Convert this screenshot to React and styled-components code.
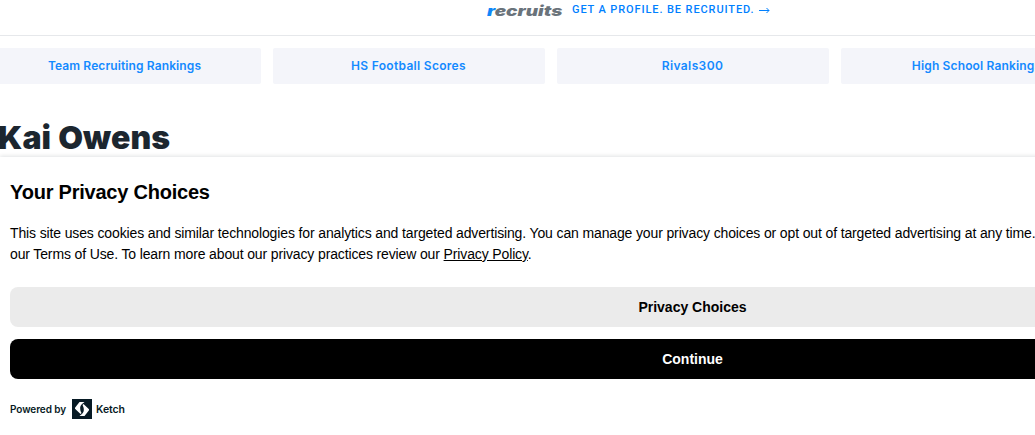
import React from 'react'
import styled, { createGlobalStyle } from 'styled-components'

const GlobalStyle = createGlobalStyle`
  * {
    box-sizing: border-box;
  }
  body {
    margin: 0;
    overflow: hidden;
    background: #fff;
  }
`

const Page = styled.main`
  position: relative;
  height: 435px;
  overflow: hidden;
  font-family: Inter, 'Liberation Sans', sans-serif;
`

const Header = styled.header`
  display: flex;
  align-items: flex-start;
  height: 36px;
  padding-left: 487px;
  border-bottom: 1px solid #e6e8eb;
  white-space: nowrap;
`

const Logo = styled.div`
  width: 85px;
  font-size: 14px;
  font-weight: 900;
  font-style: italic;
  line-height: 21px;
  color: #6a737b;
  transform: scaleX(1.355);
  transform-origin: left;

  & > span {
    color: #0f87f8;
  }
`

const Promo = styled.a`
  display: flex;
  align-items: center;
  gap: 5px;
  height: 19px;
  font-family: Roboto, sans-serif;
  font-size: 11px;
  font-weight: 500;
  letter-spacing: 0.89px;
  color: #0080ff;
`

const Tabs = styled.nav`
  display: flex;
  gap: 12px;
  margin: 12px 0 0 -11px;
`

const Tab = styled.a`
  display: flex;
  flex: 0 0 272px;
  justify-content: center;
  align-items: center;
  height: 36px;
  padding: 0 1px 2px 0;
  border-radius: 2px;
  background: #f4f5fa;
  font-size: 12px;
  font-weight: 600;
  letter-spacing: ${({ $spacing }) => $spacing};
  color: #148aff;
`

const Name = styled.h1`
  margin: 33px 0 0 -2px;
  font-size: 32px;
  font-weight: 900;
  line-height: 42px;
  letter-spacing: 0.1px;
  word-spacing: 0.5px;
  color: #1c262f;
`

const Banner = styled.section`
  position: absolute;
  top: 157px;
  left: 0;
  width: 1385px;
  height: 278px;
  padding: 22px 10px 0;
  background: #fff;
  box-shadow: 0 -1px 4px rgba(7, 26, 36, 0.12);
  font-family: 'Liberation Sans', Arial, sans-serif;
  color: #000;
`

const Title = styled.h2`
  margin: 0;
  font-size: 20px;
  line-height: 26px;
  letter-spacing: -0.22px;
`

const Description = styled.p`
  margin: 18px 0 22px;
  font-size: 14px;
  line-height: 21px;
  letter-spacing: -0.133px;
  white-space: nowrap;
`

const Link = styled.a`
  text-decoration: underline;
`

const Button = styled.button`
  display: block;
  width: 100%;
  height: 40px;
  margin-bottom: 12px;
  border: none;
  border-radius: 8px;
  background: ${({ $primary }) => ($primary ? '#000' : '#ebebeb')};
  color: ${({ $primary }) => ($primary ? '#fff' : '#000')};
  font: bold 14px 'Liberation Sans', Arial, sans-serif;
`

const Powered = styled.div`
  display: flex;
  align-items: center;
  height: 20px;
  margin-top: 20px;
  font-family: Inter, sans-serif;
  font-size: 10px;
  font-weight: 600;
  letter-spacing: -0.08px;
  color: #071a24;

  & > svg {
    margin: 0 4px 0 6px;
  }
`

const Brand = styled.span`
  font-size: 10.5px;
`

const Arrow = () => (
  <svg width="11" height="8" viewBox="0 0 11 8" fill="none" stroke="currentColor">
    <path d="M0 4.5H10M7.5 2L10 4.5L7.5 7" />
  </svg>
)

const KetchMark = () => (
  <svg width="20" height="20" viewBox="0 0 20 20">
    <rect width="20" height="20" fill="#071a24" />
    <path d="M7.5 3H12.5C9 5.5 8.2 7 8.2 9.5C8.2 11.5 9 13 9.5 14L8.5 15L3 9.8V8.8Z" fill="#fff" />
    <path d="M12.5 17H7.5C11 14.5 11.8 13 11.8 10.5C11.8 8.5 11 7 10.5 6L11.5 5L17 10.2V11.2Z" fill="#fff" />
  </svg>
)

const tabs = [
  { label: 'Team Recruiting Rankings', spacing: '0.11px' },
  { label: 'HS Football Scores', spacing: '0.3px' },
  { label: 'Rivals300', spacing: '0.4px' },
  { label: 'High School Rankings', spacing: '0.15px' }
]

const PrivacyBanner = () => (
  <Banner>
    <Title>Your Privacy Choices</Title>
    <Description>
      This site uses cookies and similar technologies for analytics and targeted advertising. You
      can manage your privacy choices or opt out of targeted advertising at any time.
      <br />
      our Terms of Use. To learn more about our privacy practices review our{' '}
      <Link>Privacy Policy</Link>.
    </Description>
    <Button>Privacy Choices</Button>
    <Button $primary>Continue</Button>
    <Powered>
      <span>Powered by</span>
      <KetchMark />
      <Brand>Ketch</Brand>
    </Powered>
  </Banner>
)

const App = () => (
  <Page>
    <GlobalStyle />
    <Header>
      <Logo>
        <span>r</span>ecruits
      </Logo>
      <Promo>
        GET A PROFILE. BE RECRUITED.
        <Arrow />
      </Promo>
    </Header>
    <Tabs>
      {tabs.map(({ label, spacing }) => (
        <Tab key={label} $spacing={spacing}>
          {label}
        </Tab>
      ))}
    </Tabs>
    <Name>Kai Owens</Name>
    <PrivacyBanner />
  </Page>
)

export default App
